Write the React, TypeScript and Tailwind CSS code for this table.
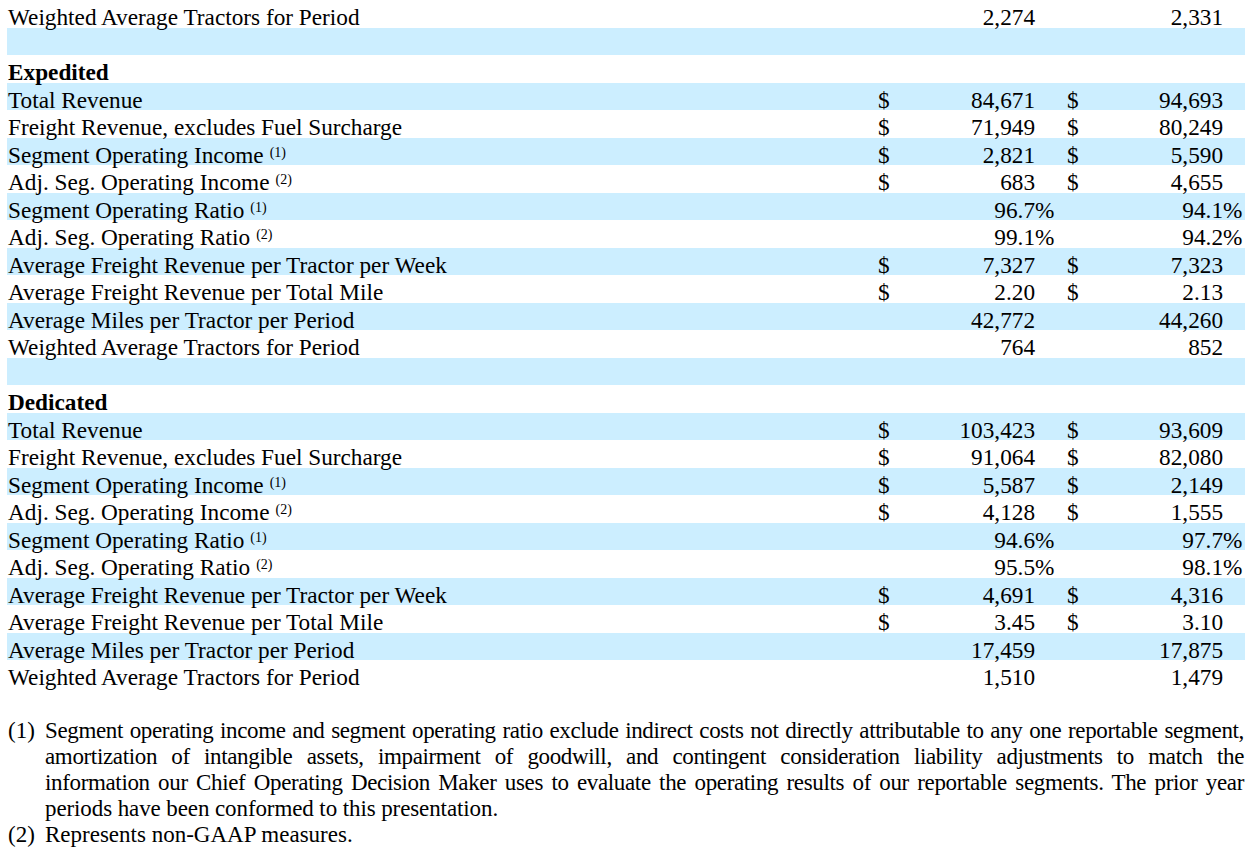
import React from "react"

type Row = {
  label?: string
  note?: string
  bold?: boolean
  dollar?: boolean
  a?: string
  b?: string
  pct?: boolean
}

const segment = (title: string, v: string[][]): Row[] => [
  { label: title, bold: true },
  { label: "Total Revenue", dollar: true, a: v[0][0], b: v[0][1] },
  { label: "Freight Revenue, excludes Fuel Surcharge", dollar: true, a: v[1][0], b: v[1][1] },
  { label: "Segment Operating Income", note: "(1)", dollar: true, a: v[2][0], b: v[2][1] },
  { label: "Adj. Seg. Operating Income", note: "(2)", dollar: true, a: v[3][0], b: v[3][1] },
  { label: "Segment Operating Ratio", note: "(1)", pct: true, a: v[4][0], b: v[4][1] },
  { label: "Adj. Seg. Operating Ratio", note: "(2)", pct: true, a: v[5][0], b: v[5][1] },
  { label: "Average Freight Revenue per Tractor per Week", dollar: true, a: v[6][0], b: v[6][1] },
  { label: "Average Freight Revenue per Total Mile", dollar: true, a: v[7][0], b: v[7][1] },
  { label: "Average Miles per Tractor per Period", a: v[8][0], b: v[8][1] },
  { label: "Weighted Average Tractors for Period", a: v[9][0], b: v[9][1] },
]

const ROWS: Row[] = [
  { label: "Weighted Average Tractors for Period", a: "2,274", b: "2,331" },
  {},
  ...segment("Expedited", [
    ["84,671", "94,693"],
    ["71,949", "80,249"],
    ["2,821", "5,590"],
    ["683", "4,655"],
    ["96.7", "94.1"],
    ["99.1", "94.2"],
    ["7,327", "7,323"],
    ["2.20", "2.13"],
    ["42,772", "44,260"],
    ["764", "852"],
  ]),
  {},
  ...segment("Dedicated", [
    ["103,423", "93,609"],
    ["91,064", "82,080"],
    ["5,587", "2,149"],
    ["4,128", "1,555"],
    ["94.6", "97.7"],
    ["95.5", "98.1"],
    ["4,691", "4,316"],
    ["3.45", "3.10"],
    ["17,459", "17,875"],
    ["1,510", "1,479"],
  ]),
]

function TableRow({ row, shaded }: { row: Row; shaded: boolean }) {
  return (
    <div
      className={
        "grid h-[27.5px] grid-cols-[871px_20px_137px_32px_20px_136px_22px] items-center pb-[3px] " +
        (shaded ? "bg-[#cceeff]" : "bg-white")
      }
    >
      <div className={"pl-[1px] whitespace-nowrap " + (row.bold ? "font-bold" : "")}>
        {row.label}
        {row.note && (
          <span className="relative -top-[6px] ml-[6px] text-[14px]">{row.note}</span>
        )}
      </div>
      <div>{row.dollar ? "$" : ""}</div>
      <div className="text-right">{row.a}</div>
      <div>{row.pct ? "%" : ""}</div>
      <div>{row.dollar ? "$" : ""}</div>
      <div className="text-right">{row.b}</div>
      <div>{row.pct ? "%" : ""}</div>
    </div>
  )
}

// lines of footnote (1) are set as in the filing, each one justified to full width
const NOTE_LINES = [
  "Segment operating income and segment operating ratio exclude indirect costs not directly attributable to any one reportable segment,",
  "amortization of intangible assets, impairment of goodwill, and contingent consideration liability adjustments to match the",
  "information our Chief Operating Decision Maker uses to evaluate the operating results of our reportable segments. The prior year",
]

export default function App() {
  return (
    <div className="min-h-screen bg-white font-['Liberation_Serif','Times_New_Roman',serif] text-[23px] text-black">
      {/* table */}
      <div className="ml-[7px] w-[1238px] text-[23.25px]">
        {ROWS.map((row, i) => (
          <TableRow key={i} row={row} shaded={i % 2 === 1} />
        ))}
      </div>

      {/* footnotes */}
      <div className="ml-[8px] mt-[30px] w-[1236px] leading-[26px]">
        <div className="flex">
          <div className="w-[37px] shrink-0">(1)</div>
          <div className="w-[1199px]">
            {NOTE_LINES.map((line, i) => (
              <div
                key={i}
                className="whitespace-nowrap text-justify tracking-[-0.35px] [text-align-last:justify] [word-spacing:-2px]"
              >
                {line}
              </div>
            ))}
            <div className="tracking-[-0.1px]">periods have been conformed to this presentation.</div>
          </div>
        </div>
        <div className="flex">
          <div className="w-[37px] shrink-0">(2)</div>
          <p>Represents non-GAAP measures.</p>
        </div>
      </div>
    </div>
  )
}
